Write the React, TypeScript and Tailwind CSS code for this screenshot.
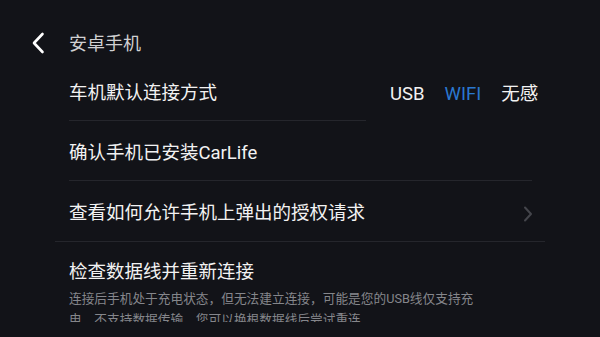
import React from 'react';

const FONT = { fontFamily: 'Roboto, "Noto Sans CJK SC", "Noto Sans", sans-serif' };

const OPTIONS = ['USB', 'WIFI', '无感'];

function BackIcon() {
  return (
    <svg width="14" height="22" viewBox="0 0 14 22" fill="none">
      <path d="M11.5 2 L3 11 L11.5 20" stroke="#ffffff" strokeWidth="2.6" strokeLinecap="round" strokeLinejoin="round" />
    </svg>
  );
}

function ChevronRight() {
  return (
    <svg width="10" height="16" viewBox="0 0 10 16" fill="none">
      <path d="M2 1.5 L8 8 L2 14.5" stroke="#44454b" strokeWidth="2" strokeLinecap="round" strokeLinejoin="round" />
    </svg>
  );
}

export default function App() {
  const selected = 'WIFI';

  return (
    <div className="w-[600px] h-[337px] bg-[#121318] text-white overflow-hidden" style={FONT}>
      {/* Header */}
      <div className="h-[61px] pt-[33px]">
        <div className="flex items-center h-5">
          <div className="w-[69px] pl-[31px] flex items-center">
            <BackIcon />
          </div>
          <span className="text-[18px] text-[#d0d0d2]">安卓手机</span>
        </div>
      </div>

      {/* List */}
      <div className="h-[261px] overflow-hidden">
        {/* Default connection */}
        <div className="flex pl-[69px] h-[60px]">
          <div className="w-[297px] border-b border-[#25262c] flex items-center pt-1.5 text-[18.5px] text-[#f2f2f2]">
            车机默认连接方式
          </div>
          <div className="flex items-center gap-5 pl-6 pt-2 text-[18.5px]">
            {OPTIONS.map((o) => (
              <span key={o} className={o === selected ? 'text-[#2a78d0]' : 'text-[#f2f2f2]'}>
                {o}
              </span>
            ))}
          </div>
        </div>

        <div className="ml-[69px] w-[463px] h-[60px] border-b border-[#25262c] flex items-center pt-1.5 text-[18.5px] text-[#f2f2f2]">
          确认手机已安装CarLife
        </div>

        <div className="ml-[55px] w-[490px] h-[61px] border-b border-[#25262c] flex items-center justify-between pl-[14px] pr-[12px] pt-1.5">
          <span className="text-[18.5px] text-[#f2f2f2]">查看如何允许手机上弹出的授权请求</span>
          <ChevronRight />
        </div>

        <div className="pl-[69px] pt-[17px]">
          <div className="text-[18.5px] leading-[26px] text-[#f2f2f2]">检查数据线并重新连接</div>
          <div className="mt-[3px] text-[12.7px] leading-[21px] text-[#85868b]">
            <div className="whitespace-nowrap">连接后手机处于充电状态，但无法建立连接，可能是您的USB线仅支持充</div>
            <div className="whitespace-nowrap">电，不支持数据传输，您可以换根数据线后尝试重连</div>
          </div>
        </div>
      </div>
    </div>
  );
}
